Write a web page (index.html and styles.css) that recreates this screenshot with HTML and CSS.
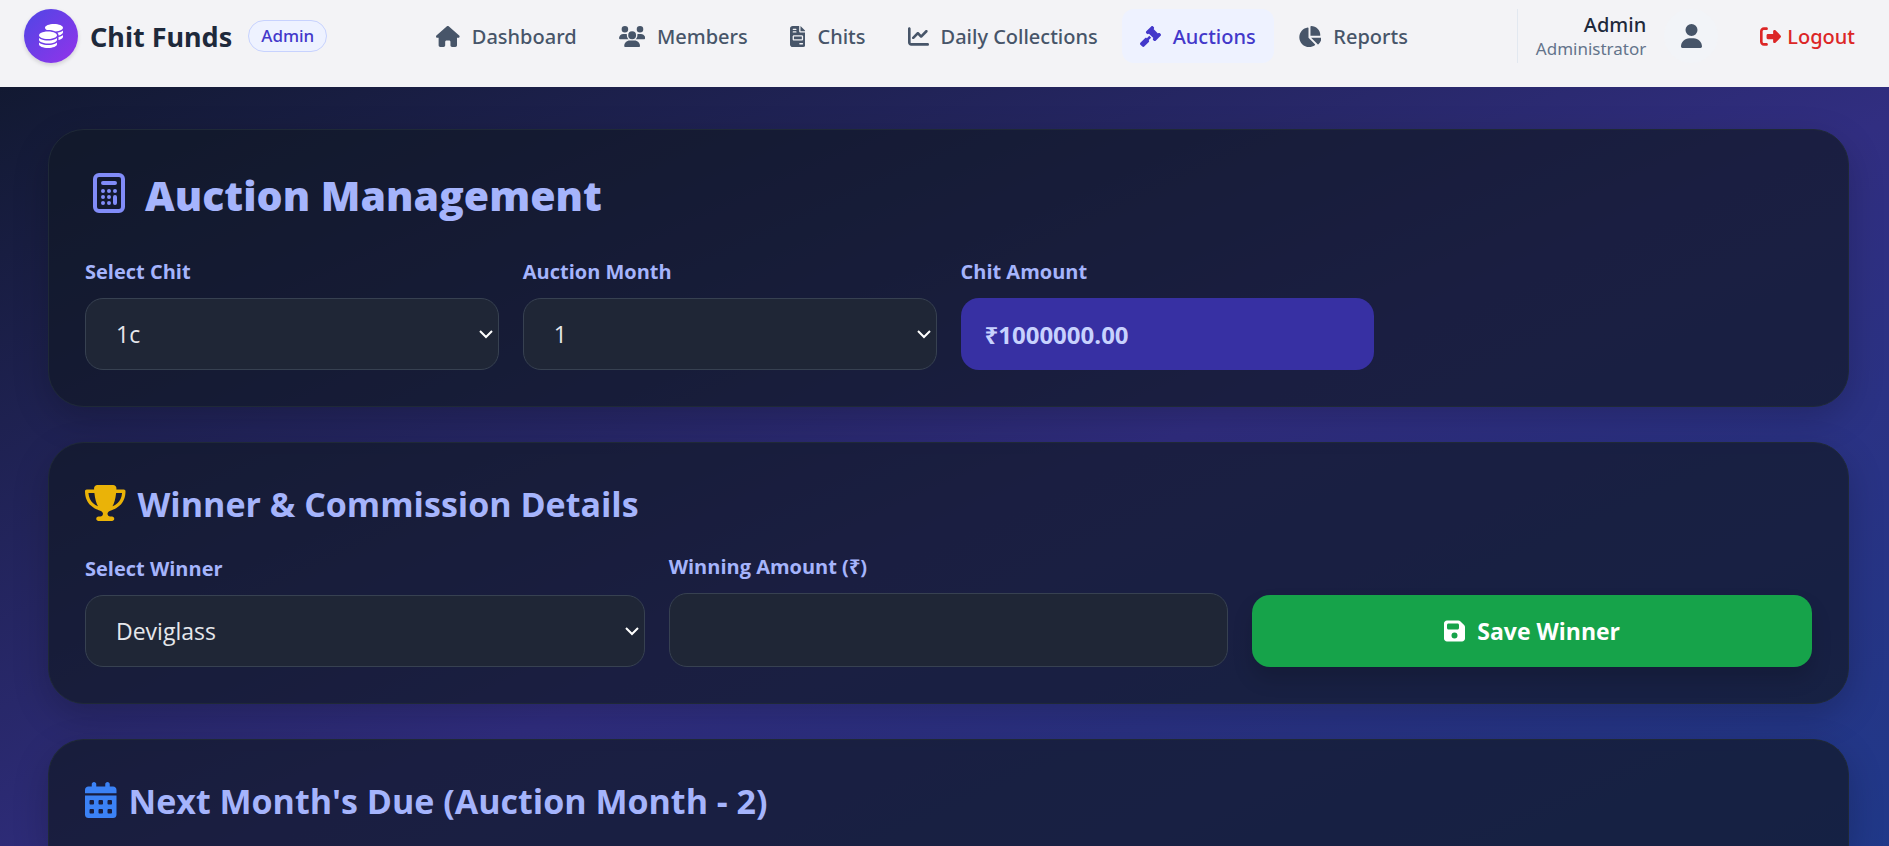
FILE: index.html
```
<!DOCTYPE html>
<html lang="en">
<head>
    <meta charset="UTF-8">
    <meta name="viewport" content="width=device-width, initial-scale=1.0">
    <title>Chit Funds - Auctions</title>
    <link rel="stylesheet" href="styles.css">
</head>
<body>
    <header class="navbar">
        <div class="brand">
            <span class="brand-logo">
                <svg class="icon" viewBox="0 0 512 512"><path d="M512 80c0 18-14.3 34.6-38.4 48c-29.1 16.1-72.5 27.5-122.3 30.9c-3.7-1.8-7.4-3.5-11.3-5C300.6 137.4 248.2 128 192 128c-8.3 0-16.4 .2-24.5 .6l-1.1-.6C142.3 114.6 128 98 128 80c0-44.2 86-80 192-80S512 35.8 512 80zM160.7 161.1c10.2-.7 20.7-1.1 31.3-1.1c62.2 0 117.4 12.3 152.5 31.4C369.3 204.9 384 221.7 384 240c0 4-.7 7.9-2.1 11.7c-4.6 13.2-17 25.3-35 35.5c-.4 .2-.9 .5-1.3 .7c-35 19.4-90.8 32-153.6 32c-59.6 0-112.9-11.3-148.2-29.1c-1.9-.9-3.7-1.9-5.5-2.9C14.3 274.6 0 258 0 240c0-34.8 53.4-64.5 128-75.4c10.5-1.5 21.4-2.7 32.7-3.5zM416 240c0-21.9-10.6-39.9-24.1-53.4c28.3-4.4 54.2-11.4 76.2-20.5c16.3-6.8 31.5-15.2 43.9-25.5V176c0 19.3-16.5 37.1-43.8 50.9c-14.6 7.4-32.4 13.7-52.4 18.5c.1-1.8 .2-3.5 .2-5.3zm-32 96c0 18-14.3 34.6-38.4 48c-1.8 1-3.6 1.9-5.5 2.9C304.9 404.7 251.6 416 192 416c-62.8 0-118.6-12.6-153.6-32C14.3 370.6 0 354 0 336V300.6c12.5 10.3 27.6 18.7 43.9 25.5C83.4 342.6 135.8 352 192 352s108.6-9.4 148.1-25.9c7.8-3.2 15.3-6.9 22.4-10.9c6.1-3.4 11.8-7.2 17.2-11.2c1.5-1.1 2.9-2.3 4.3-3.4V336zm32 0V278.1c19-4.2 36.5-9.5 52.1-16c16.3-6.8 31.5-15.2 43.9-25.5V272c0 10.5-5 21-14.9 30.9c-16.3 16.3-45 29.7-81.3 38.4c.1-1.7 .2-3.5 .2-5.3zM192 448c56.2 0 108.6-9.4 148.1-25.9c16.3-6.8 31.5-15.2 43.9-25.5V432c0 44.2-86 80-192 80S0 476.2 0 432V396.6c12.5 10.3 27.6 18.7 43.9 25.5C83.4 438.6 135.8 448 192 448z"/></svg>
            </span>
            <span class="brand-name">Chit Funds</span>
            <span class="badge">Admin</span>
        </div>

        <nav class="nav-links">
            <a href="#" class="nav-link">
                <svg class="icon" viewBox="0 0 576 512"><path d="M575.8 255.5c0 18-15 32.1-32 32.1h-32l.7 160.2c0 2.7-.2 5.4-.5 8.1V472c0 22.1-17.9 40-40 40H392c-22.1 0-40-17.9-40-40V384c0-17.7-14.3-32-32-32H256c-17.7 0-32 14.3-32 32v88c0 22.1-17.9 40-40 40H104c-22.1 0-40-17.9-40-40V287.6H32c-18 0-32-14-32-32.1c0-9 3-17 10-24L266.4 8c7-7 15-8 22-8s15 2 21 7L564.8 231.5c8 7 12 15 11 24z"/></svg>
                Dashboard
            </a>
            <a href="#" class="nav-link">
                <svg class="icon" viewBox="0 0 640 512"><path d="M144 0a80 80 0 1 1 0 160A80 80 0 1 1 144 0zM512 0a80 80 0 1 1 0 160A80 80 0 1 1 512 0zM0 298.7C0 239.8 47.8 192 106.7 192h42.7c15.9 0 31 3.5 44.6 9.7c-1.3 7.2-1.9 14.7-1.9 22.3c0 38.2 16.8 72.5 43.3 96H21.3C9.6 320 0 310.4 0 298.7zM405.3 320c26.6-23.5 43.3-57.8 43.3-96c0-7.6-.7-15-1.9-22.3c13.6-6.3 28.7-9.7 44.6-9.7h42.7C592.2 192 640 239.8 640 298.7c0 11.8-9.6 21.3-21.3 21.3H405.3zM224 224a96 96 0 1 1 192 0 96 96 0 1 1 -192 0zM128 485.3C128 411.7 187.7 352 261.3 352H378.7C452.3 352 512 411.7 512 485.3c0 14.7-11.9 26.7-26.7 26.7H154.7c-14.7 0-26.7-11.9-26.7-26.7z"/></svg>
                Members
            </a>
            <a href="#" class="nav-link">
                <svg class="icon" viewBox="0 0 384 512"><path d="M64 0C28.7 0 0 28.7 0 64V448c0 35.3 28.7 64 64 64H320c35.3 0 64-28.7 64-64V160H256c-17.7 0-32-14.3-32-32V0H64zM256 0V128H384L256 0zM80 64h64c8.8 0 16 7.2 16 16s-7.2 16-16 16H80c-8.8 0-16-7.2-16-16s7.2-16 16-16zm0 64h64c8.8 0 16 7.2 16 16s-7.2 16-16 16H80c-8.8 0-16-7.2-16-16s7.2-16 16-16zm16 96H288c17.7 0 32 14.3 32 32v64c0 17.7-14.3 32-32 32H96c-17.7 0-32-14.3-32-32V256c0-17.7 14.3-32 32-32zm0 32v64H288V256H96zM240 416h64c8.8 0 16 7.2 16 16s-7.2 16-16 16H240c-8.8 0-16-7.2-16-16s7.2-16 16-16z" fill-rule="evenodd"/></svg>
                Chits
            </a>
            <a href="#" class="nav-link">
                <svg class="icon" viewBox="0 0 512 512"><path d="M64 64c0-17.7-14.3-32-32-32S0 46.3 0 64V400c0 44.2 35.8 80 80 80H480c17.7 0 32-14.3 32-32s-14.3-32-32-32H80c-8.8 0-16-7.2-16-16V64zm406.6 86.6c12.5-12.5 12.5-32.8 0-45.3s-32.8-12.5-45.3 0L320 210.7l-57.4-57.4c-12.5-12.5-32.8-12.5-45.3 0l-112 112c-12.5 12.5-12.5 32.8 0 45.3s32.8 12.5 45.3 0L240 221.3l57.4 57.4c12.5 12.5 32.8 12.5 45.3 0l128-128z"/></svg>
                Daily Collections
            </a>
            <a href="#" class="nav-link active">
                <svg class="icon" viewBox="0 0 512 512"><path d="M318.6 9.4c-12.5-12.5-32.8-12.5-45.3 0l-120 120c-12.5 12.5-12.5 32.8 0 45.3l16 16c12.5 12.5 32.8 12.5 45.3 0l4-4L325.4 293.4l-4 4c-12.5 12.5-12.5 32.8 0 45.3l16 16c12.5 12.5 32.8 12.5 45.3 0l120-120c12.5-12.5 12.5-32.8 0-45.3l-16-16c-12.5-12.5-32.8-12.5-45.3 0l-4 4L330.6 74.6l4-4c12.5-12.5 12.5-32.8 0-45.3l-16-16zm-152 288c-12.5-12.5-32.8-12.5-45.3 0l-112 112c-12.5 12.5-12.5 32.8 0 45.3l48 48c12.5 12.5 32.8 12.5 45.3 0l112-112c12.5-12.5 12.5-32.8 0-45.3l-1.4-1.4L272 285.3 226.7 240 168 298.7l-1.4-1.4z"/></svg>
                Auctions
            </a>
            <a href="#" class="nav-link">
                <svg class="icon" viewBox="0 0 576 512"><path d="M304 240V16.6c0-9 7-16.6 16-16.6C443.7 0 544 100.3 544 224c0 9-7.6 16-16.6 16H304zM32 272C32 150.7 122.1 50.3 239 34.3c9.2-1.3 17 6.1 17 15.4V288L412.5 444.5c6.7 6.7 6.2 17.7-1.5 23.1C371.8 495.6 323.8 512 272 512C139.5 512 32 404.6 32 272zm526.4 16c9.3 0 16.6 7.8 15.4 17c-7.7 55.9-34.6 105.6-73.9 142.3c-6 5.6-15.4 5.2-21.2-.7L320 288H558.4z"/></svg>
                Reports
            </a>
        </nav>

        <div class="user-area">
            <div class="user-info">
                <span class="user-name">Admin</span>
                <span class="user-role">Administrator</span>
            </div>
            <span class="avatar">
                <svg class="icon" viewBox="0 0 448 512"><path d="M224 256A128 128 0 1 0 224 0a128 128 0 1 0 0 256zm-45.7 48C79.8 304 0 383.8 0 482.3C0 498.7 13.3 512 29.7 512H418.3c16.4 0 29.7-13.3 29.7-29.7C448 383.8 368.2 304 269.7 304H178.3z"/></svg>
            </span>
            <button type="button" class="logout">
                <svg class="icon" viewBox="0 0 512 512"><path d="M377.9 105.9L500.7 228.7c7.2 7.2 11.3 17.1 11.3 27.3s-4.1 20.1-11.3 27.3L377.9 406.1c-6.4 6.4-15 9.9-24 9.9c-18.7 0-33.9-15.2-33.9-33.9l0-62.1-128 0c-17.7 0-32-14.3-32-32l0-64c0-17.7 14.3-32 32-32l128 0 0-62.1c0-18.7 15.2-33.9 33.9-33.9c9 0 17.6 3.6 24 9.9zM160 96L96 96c-17.7 0-32 14.3-32 32l0 256c0 17.7 14.3 32 32 32l64 0c17.7 0 32 14.3 32 32s-14.3 32-32 32l-64 0c-53 0-96-43-96-96L0 128C0 75 43 32 96 32l64 0c17.7 0 32 14.3 32 32s-14.3 32-32 32z"/></svg>
                Logout
            </button>
        </div>
    </header>

    <main class="content">
        <section class="card">
            <h1 class="page-title">
                <svg class="calc-icon" viewBox="0 0 32 40" width="32" height="40">
                    <rect x="2" y="2" width="28" height="36" rx="4"/>
                    <path d="M10 10h12M10 18h0M16 18h0M22 18h0M10 24h0M16 24h0M10 30h0M16 30h0M22 24v6"/>
                </svg>
                <span>Auction Management</span>
            </h1>
            <div class="grid grid-4">
                <div class="field">
                    <label for="chit">Select Chit</label>
                    <select id="chit" class="control">
                        <option>1c</option>
                    </select>
                </div>
                <div class="field">
                    <label for="month">Auction Month</label>
                    <select id="month" class="control">
                        <option>1</option>
                        <option>2</option>
                    </select>
                </div>
                <div class="field">
                    <label for="chit-amount">Chit Amount</label>
                    <input type="text" id="chit-amount" class="amount" value="₹1000000.00" readonly>
                </div>
            </div>
        </section>

        <section class="card">
            <h2 class="section-title">
                <svg class="icon trophy" viewBox="0 0 576 512"><path d="M400 0H176c-26.5 0-48.1 21.8-47.1 48.2c.2 5.3 .4 10.6 .7 15.8H24C10.7 64 0 74.7 0 88c0 92.6 33.5 157 78.5 200.7c44.3 43.1 98.3 64.8 138.1 75.8c23.4 6.5 39.4 26 39.4 45.6c0 20.9-17 37.9-37.9 37.9H192c-17.7 0-32 14.3-32 32s14.3 32 32 32H384c17.7 0 32-14.3 32-32s-14.3-32-32-32H357.9C337 448 320 431 320 410.1c0-19.6 15.9-39.2 39.4-45.6c39.9-11 93.9-32.7 138.2-75.8C542.5 245 576 180.6 576 88c0-13.3-10.7-24-24-24H446.4c.3-5.2 .5-10.4 .7-15.8C448.1 21.8 426.5 0 400 0zM48.9 112h84.4c9.1 90.1 29.2 150.3 51.9 190.6c-24.9-11-50.8-26.5-73.2-48.3c-32-31.1-58-76-63-142.3zM464.1 254.3c-22.4 21.8-48.3 37.3-73.2 48.3c22.7-40.3 42.8-100.5 51.9-190.6h84.4c-5.1 66.3-31.1 111.2-63 142.3z"/></svg>
                <span>Winner &amp; Commission Details</span>
            </h2>
            <form class="grid grid-3">
                <div class="field">
                    <label for="winner">Select Winner</label>
                    <select id="winner" class="control">
                        <option>Deviglass</option>
                    </select>
                </div>
                <div class="field">
                    <label for="winning-amount">Winning Amount (₹)</label>
                    <input type="text" id="winning-amount" class="control control-input">
                </div>
                <button type="button" class="save-btn">
                    <svg class="icon" viewBox="0 0 448 512"><path d="M64 32C28.7 32 0 60.7 0 96V416c0 35.3 28.7 64 64 64H384c35.3 0 64-28.7 64-64V173.3c0-17-6.7-33.3-18.7-45.3L352 50.7C340 38.7 323.7 32 306.7 32H64zm0 96c0-17.7 14.3-32 32-32H288c17.7 0 32 14.3 32 32v64c0 17.7-14.3 32-32 32H96c-17.7 0-32-14.3-32-32V128zM224 288a64 64 0 1 1 0 128 64 64 0 1 1 0-128z" fill-rule="evenodd"/></svg>
                    <span>Save Winner</span>
                </button>
            </form>
        </section>

        <section class="card card-due">
            <h2 class="section-title">
                <svg class="icon calendar" viewBox="0 0 448 512"><path d="M128 0c17.7 0 32 14.3 32 32V64H288V32c0-17.7 14.3-32 32-32s32 14.3 32 32V64h48c26.5 0 48 21.5 48 48v48H0V112C0 85.5 21.5 64 48 64H96V32c0-17.7 14.3-32 32-32zM0 192H448V464c0 26.5-21.5 48-48 48H48c-26.5 0-48-21.5-48-48V192zm64 80v32c0 8.8 7.2 16 16 16h32c8.8 0 16-7.2 16-16V272c0-8.8-7.2-16-16-16H80c-8.8 0-16 7.2-16 16zm128 0v32c0 8.8 7.2 16 16 16h32c8.8 0 16-7.2 16-16V272c0-8.8-7.2-16-16-16H208c-8.8 0-16 7.2-16 16zm144-16c-8.8 0-16 7.2-16 16v32c0 8.8 7.2 16 16 16h32c8.8 0 16-7.2 16-16V272c0-8.8-7.2-16-16-16H336zM64 400v32c0 8.8 7.2 16 16 16h32c8.8 0 16-7.2 16-16V400c0-8.8-7.2-16-16-16H80c-8.8 0-16 7.2-16 16zm144-16c-8.8 0-16 7.2-16 16v32c0 8.8 7.2 16 16 16h32c8.8 0 16-7.2 16-16V400c0-8.8-7.2-16-16-16H208zm112 16v32c0 8.8 7.2 16 16 16h32c8.8 0 16-7.2 16-16V400c0-8.8-7.2-16-16-16H336c-8.8 0-16 7.2-16 16z" fill-rule="evenodd"/></svg>
                <span>Next Month's Due (Auction Month - 2)</span>
            </h2>
        </section>
    </main>
</body>
</html>
```
FILE: styles.css
```
* {
    box-sizing: border-box;
}
body {
    margin: 0;
    height: 100vh;
    overflow: hidden;
    display: flex;
    flex-direction: column;
    font-family: "Segoe UI", "Open Sans", "Noto Sans", sans-serif;
    color: #e5e7eb;
    background: linear-gradient(to bottom right, #0f172a, #312e81 57%, #1e3a8a 106%);
}
.icon {
    height: 1em;
    width: auto;
    fill: currentColor;
    flex-shrink: 0;
}

/* Navbar */
.navbar {
    display: flex;
    justify-content: space-between;
    align-items: flex-start;
    flex-shrink: 0;
    height: 87px;
    padding: 9px 16px 0 24px;
    background: #f3f3f6;
    font-family: "Segoe UI", "Noto Sans", sans-serif;
}
.brand {
    display: flex;
    align-items: center;
    height: 54px;
}
.brand-logo {
    display: flex;
    align-items: center;
    justify-content: center;
    width: 54px;
    height: 54px;
    border-radius: 50%;
    font-size: 24px;
    color: #fff;
    background: linear-gradient(to bottom right, #4f46e5, #9333ea);
    box-shadow: 0 2px 4px rgba(0, 0, 0, 0.15);
}
.brand-name {
    margin-left: 12px;
    font-size: 27px;
    font-weight: 700;
    color: #1e293b;
}
.badge {
    margin-left: 16px;
    padding: 0 12px;
    border: 1px solid #c7d2fe;
    border-radius: 16px;
    background: #eef2ff;
    color: #4338ca;
    font-size: 17px;
    font-weight: 500;
    line-height: 30px;
}
.nav-links {
    display: flex;
    gap: 6px;
}
.nav-link {
    display: flex;
    align-items: center;
    gap: 12px;
    height: 54px;
    padding: 0 18px;
    border-radius: 12px;
    color: #475569;
    font-size: 20px;
    font-weight: 500;
    text-decoration: none;
    white-space: nowrap;
}
.nav-link.active {
    background: #eef2ff;
    color: #4338ca;
}
.user-area {
    display: flex;
    align-items: center;
    height: 54px;
    border-left: 1px solid #e2e8f0;
    padding-left: 18px;
}
.user-info {
    display: flex;
    flex-direction: column;
    align-items: flex-end;
}
.user-name {
    font-size: 20px;
    font-weight: 500;
    line-height: 26px;
    color: #1e293b;
}
.user-role {
    font-size: 17px;
    line-height: 22px;
    color: #64748b;
}
.avatar {
    display: flex;
    align-items: center;
    justify-content: center;
    width: 54px;
    height: 54px;
    margin: 0 24px 0 18px;
    border-radius: 50%;
    background: #f2f4f8;
    color: #475569;
    font-size: 24px;
}
.logout {
    display: flex;
    align-items: center;
    gap: 6px;
    height: 54px;
    padding: 0 18px;
    border: none;
    border-radius: 12px;
    background: none;
    color: #dc2626;
    font-family: inherit;
    font-size: 20px;
    font-weight: 500;
    cursor: pointer;
}
.nav-link .icon,
.logout .icon {
    height: 21px;
}

/* Content */
.content {
    display: flex;
    flex-direction: column;
    flex: 1;
    min-height: 0;
    gap: 35px;
    padding: 42px 40px 0 48px;
}
.card {
    flex-shrink: 0;
    padding: 36px;
    border: 1px solid #1f2937;
    border-radius: 36px;
    background: rgba(17, 24, 39, 0.7);
    box-shadow: 0 12px 36px rgba(0, 0, 0, 0.2);
}
.card-due {
    flex: 1 0 auto;
    padding-bottom: 0;
    border-bottom: none;
    border-radius: 36px 36px 0 0;
}
.card-due .section-title {
    margin-bottom: 0;
}
.page-title {
    display: flex;
    align-items: flex-start;
    gap: 20px;
    margin: 0 0 32px;
    padding-left: 8px;
    font-size: 41px;
    font-weight: 800;
    line-height: 58px;
    color: #a5b4fc;
}
.calc-icon {
    margin-top: 7px;
    fill: none;
    stroke: #818cf8;
    stroke-width: 4;
    stroke-linecap: round;
    stroke-linejoin: round;
}
.section-title {
    display: flex;
    align-items: center;
    gap: 12px;
    margin: 0 0 22px;
    font-size: 34px;
    font-weight: 700;
    line-height: 50px;
    color: #a5b4fc;
}
.section-title .icon {
    height: 36px;
    margin-bottom: 3px;
}
.trophy {
    color: #eab308;
}
.calendar {
    color: #3b82f6;
}
.grid {
    display: grid;
    gap: 24px;
    align-items: end;
}
.grid-4 {
    grid-template-columns: repeat(4, 1fr);
}
.grid-3 {
    grid-template-columns: repeat(3, 1fr);
}
.field label {
    display: block;
    margin-bottom: 10px;
    font-size: 20px;
    font-weight: 700;
    line-height: 32px;
    color: #a5b4fc;
}
.control,
.amount {
    display: block;
    width: 100%;
    height: 72px;
    border-radius: 18px;
    font-family: inherit;
    font-size: 24px;
}
.control {
    appearance: none;
    padding: 0 30px;
    border: 1px solid #374151;
    background: #1f2636;
    color: #e5e7eb;
    font-size: 23px;
}
select.control {
    background: #1f2636 url("data:image/svg+xml,%3Csvg xmlns='http://www.w3.org/2000/svg' width='14' height='9' fill='none' stroke='%23fff' stroke-width='2'%3E%3Cpath d='M1 1l6 6 6-6'/%3E%3C/svg%3E") no-repeat right 5px center;
}
.control-input {
    height: 74px;
}
.amount {
    padding: 0 24px;
    border: none;
    background: #3730a3;
    color: #c7d2fe;
    font-weight: 700;
}
.save-btn {
    display: flex;
    align-items: center;
    justify-content: center;
    gap: 12px;
    height: 72px;
    border: none;
    border-radius: 18px;
    background: #16a34a;
    color: #fff;
    font-family: inherit;
    font-size: 23px;
    font-weight: 700;
    box-shadow: 0 12px 20px rgba(0, 0, 0, 0.15);
    cursor: pointer;
}
.save-btn .icon {
    height: 24px;
}
```
